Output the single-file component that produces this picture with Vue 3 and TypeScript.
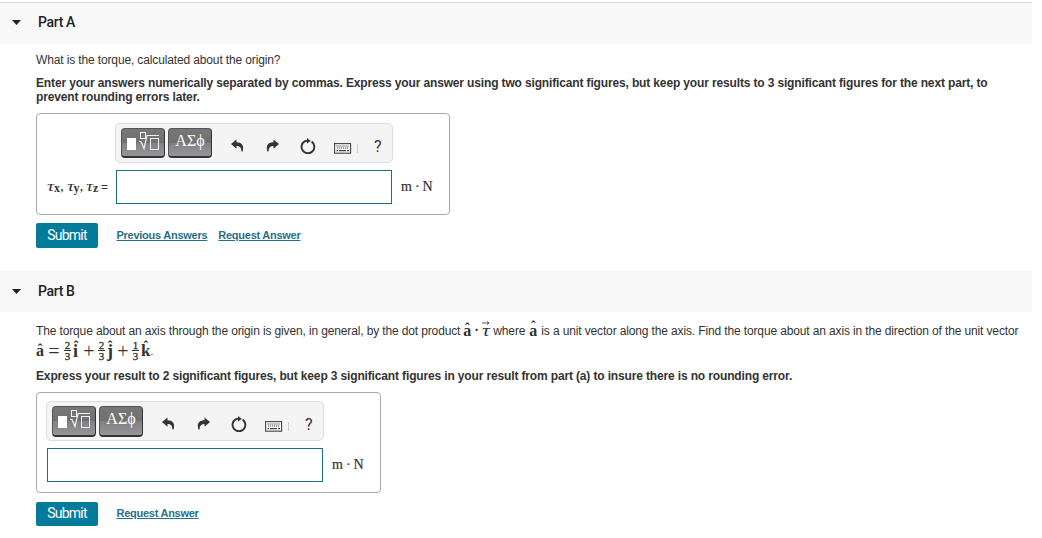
<script setup lang="ts">
import { ref } from "vue";

interface Part {
  id: string;
  title: string;
  label: boolean;
  links: string[];
}

const parts: Part[] = [
  { id: "a", title: "Part A", label: true, links: ["Previous Answers", "Request Answer"] },
  { id: "b", title: "Part B", label: false, links: ["Request Answer"] },
];

const components = ["x", "y", "z"];

// Terms of the unit vector
const terms = [
  { num: "2", den: "3", axis: "i" },
  { num: "2", den: "3", axis: "j" },
  { num: "1", den: "3", axis: "k" },
];

const answers = ref<Record<string, string>>({ a: "", b: "" });
</script>

<template>
  <main class="page">
    <section v-for="part in parts" :key="part.id" class="part" :class="'part-' + part.id">
      <header class="part-header">
        <svg class="caret" width="9" height="5" viewBox="0 0 9 5">
          <path d="M0 0H9L4.5 5Z" fill="#222" />
        </svg>
        <h2>{{ part.title }}</h2>
      </header>

      <div class="part-body">
        <template v-if="part.id === 'a'">
          <p class="question">What is the torque, calculated about the origin?</p>
          <p class="instructions">
            Enter your answers numerically separated by commas. Express your answer using two significant figures, but keep your results to 3 significant figures for the next part, to<br />
            prevent rounding errors later.
          </p>
        </template>
        <template v-else>
          <p class="question">
            <span>The torque about an axis through the origin is given, in general, by the dot product</span>
            <span class="math inline-dot"><b class="hat">a</b><span class="cdot">·</span><span class="vec"><i class="tau">τ</i><svg width="8" height="4" viewBox="0 0 8 4"><path d="M0 2H7M5 .4L7 2L5 3.6" fill="none" stroke="#333" stroke-width=".8" /></svg></span></span>
            <span class="where">where</span>
            <span class="math inline-a"><b class="hat">a</b></span>
            <span>is a unit vector along the axis. Find the torque about an axis in the direction of the unit vector</span>
          </p>
          <p class="formula math">
            <b class="hat">a</b><span class="op eq">=</span>
            <template v-for="(term, i) in terms" :key="term.axis">
              <span v-if="i > 0" class="op plus">+</span>
              <span class="frac"><span>{{ term.num }}</span><span class="den">{{ term.den }}</span></span>
              <b class="hat tall" :class="'axis-' + term.axis">{{ term.axis }}</b>
            </template>
            <span class="period">.</span>
          </p>
          <p class="instructions">
            Express your result to 2 significant figures, but keep 3 significant figures in your result from part (a) to insure there is no rounding error.
          </p>
        </template>

        <div class="answer-box">
          <div v-if="part.label" class="label math">
            <template v-for="(c, i) in components" :key="c"><i class="tau">τ</i><span class="sub">{{ c }}</span><span v-if="i < 2" class="comma">,</span></template>
            <span class="label-eq">=</span>
          </div>
          <div class="editor">
            <div class="toolbar">
              <button class="palette" aria-label="Templates">
                <svg width="32" height="20" viewBox="0 0 32 20">
                  <rect x="0" y="6" width="9" height="12" fill="#fff" />
                  <g fill="none" stroke="#f1f1f1">
                    <rect x="13.5" y="0.5" width="5" height="6" />
                    <path d="M12 9.5H14L17 16.5L20 3.5H32" stroke-width="1.2" />
                    <rect x="23.5" y="6.5" width="8" height="11" />
                  </g>
                </svg>
              </button>
              <button class="palette greek">ΑΣϕ</button>
              <svg class="icon undo" width="14" height="13" viewBox="0 0 14 13">
                <path d="M0 5L5.5 .5V3.2C10.8 3.2 13.4 6.6 11.6 12.5H10.4C10.6 8.7 8.7 7 5.5 7V9.8Z" fill="#333" />
              </svg>
              <svg class="icon redo" width="14" height="13" viewBox="0 0 14 13">
                <path d="M13 5L7.5 .5V3.2C2.2 3.2-.4 6.6 1.4 12.5H2.6C2.4 8.7 4.3 7 7.5 7V9.8Z" fill="#333" />
              </svg>
              <svg class="icon reset" width="16" height="16" viewBox="0 0 16 16">
                <path d="M11.6 3.6A6.4 6.4 0 1 1 4.6 3.4Q6 2.6 8 2.6" fill="none" stroke="#333" stroke-width="1.9" />
                <path d="M7 0L10.8 3L7 5.6Z" fill="#333" />
              </svg>
              <svg class="icon keyboard" width="18" height="11" viewBox="0 0 18 11">
                <rect x=".6" y=".6" width="16" height="9.6" fill="#fafafa" stroke="#444" stroke-width="1.1" />
                <path d="M2.5 3H15M3 5H15" stroke="#444" stroke-width="1.1" stroke-dasharray="1.2 .8" />
                <path d="M2.5 7.6H4M5 7.6H12M13 7.6H15" stroke="#444" stroke-width="1.2" />
              </svg>
              <span class="divider"></span>
              <span class="help">?</span>
            </div>
            <input v-model="answers[part.id]" class="answer" type="text" :aria-label="part.title" />
          </div>
          <div class="units math">m<span>·</span>N</div>
        </div>

        <div class="actions">
          <button class="submit">Submit</button>
          <a v-for="link in part.links" :key="link" href="#" @click.prevent>{{ link }}</a>
        </div>
      </div>
    </section>
  </main>
</template>

<style>
body {
  margin: 0;
  background: #fff;
}
</style>

<style scoped>
.page {
  width: 1032px;
  height: 538px;
  overflow: hidden;
  box-sizing: border-box;
  padding-top: 2px;
  color: #333;
  font: 12px/14px "Liberation Sans", Arial, sans-serif;
}
p {
  margin: 0;
  white-space: nowrap;
}
.part-header {
  display: flex;
  align-items: center;
  height: 41px;
  padding-left: 12px;
  background: #f8f8f8;
}
.part-a .part-header {
  border-top: 1px solid #d8d8d8;
}
.part-a {
  height: 269px;
}
h2 {
  margin: 0 0 1px 17px;
  color: #222;
  font: 500 14px/18px Roboto, sans-serif;
  letter-spacing: -0.35px;
}
.part-a h2 {
  margin-bottom: 3px;
}
.part-a .caret {
  margin-bottom: 2px;
}
.part-body {
  padding-left: 36px;
}
.part-a .question {
  padding-top: 9px;
}
.part-a .instructions {
  padding-top: 9px;
}
.question {
  letter-spacing: -0.135px;
}
.instructions {
  font-weight: bold;
  letter-spacing: -0.145px;
}
.part-b .question {
  display: flex;
  height: 14px;
  padding-top: 12px;
}
.math {
  font-family: "Liberation Serif", "Times New Roman", serif;
  letter-spacing: 0;
}
.hat {
  position: relative;
  font-size: 16px;
}
.hat::before {
  content: "ˆ";
  position: absolute;
  left: 50%;
  top: -1px;
  transform: translateX(-50%);
  font-size: 14px;
}
.hat.tall::before {
  top: -4px;
}
.tau {
  display: inline-block;
  width: 7px;
  transform: scaleX(1.35);
  transform-origin: left;
}
.inline-dot {
  display: flex;
  width: 25px;
  margin-left: 3px;
}
.inline-dot .hat::before,
.inline-a .hat::before {
  top: -2px;
}
.cdot {
  margin: 0 3px;
  font-size: 14px;
  font-weight: bold;
}
.vec {
  position: relative;
  font-size: 16px;
}
.vec svg {
  position: absolute;
  left: 0;
  top: -3px;
}
.where {
  margin-left: 5px;
}
.inline-a {
  margin: 0 4px;
}
.formula {
  display: flex;
  align-items: center;
  height: 26px;
  font-size: 15px;
}
.part-b .instructions {
  padding-top: 5px;
}
.op {
  width: 12px;
  font-size: 20px;
  text-align: center;
}
.eq {
  margin: 0 4px 0 4px;
}
.plus {
  margin: 0 3px 0 4px;
}
.frac {
  display: flex;
  flex-direction: column;
  width: 7px;
  margin-right: 2px;
  font-size: 11px;
  line-height: 9px;
  text-align: center;
  -webkit-text-stroke: 0.3px #333;
}
.den {
  border-top: 1px solid #333;
  padding-top: 1px;
}
.axis-i,
.axis-j {
  width: 6px;
  font-size: 18px;
}
.axis-k {
  font-size: 17px;
}
.period {
  font-size: 11px;
}
.answer-box {
  display: flex;
  box-sizing: border-box;
  width: 414px;
  height: 102px;
  margin-top: 9px;
  padding: 9px 0 0 9px;
  border: 1px solid #a9a9a9;
  border-radius: 4px;
}
.part-b .answer-box {
  width: 345px;
  height: 101px;
  padding-top: 8px;
}
.label {
  display: flex;
  align-items: baseline;
  box-sizing: border-box;
  width: 69px;
  padding: 56px 0 0 1px;
  font-size: 15px;
}
.sub {
  width: 6px;
  font-size: 12px;
  font-weight: bold;
  transform: translateY(1px);
}
.comma {
  width: 4px;
  margin-right: 2.5px;
}
.label-eq {
  margin-left: 2px;
  font: 12px/14px "Liberation Sans", sans-serif;
}
.editor {
  width: 278px;
}
.toolbar {
  display: flex;
  box-sizing: border-box;
  width: 278px;
  height: 40px;
  padding: 4px 0 0 5px;
  background: #f4f4f4;
  border: 1px solid #ddd;
  border-radius: 5px;
}
.palette {
  display: flex;
  justify-content: center;
  box-sizing: border-box;
  width: 44px;
  height: 30px;
  margin-right: 3px;
  padding: 0;
  color: #fff;
  background: linear-gradient(#777 0, #707072 50%, #808083 51%, #96969a 100%);
  border: 1px solid #555;
  border-right-color: #333;
  border-bottom: 2px solid #333;
  border-radius: 4px;
}
.part-b .palette {
  height: 31px;
}
.palette svg {
  flex: none;
  margin-top: 3px;
}
.greek {
  padding-top: 2px;
  font: 16px/20px "Liberation Serif", serif;
}
.icon {
  flex: none;
}
.undo {
  margin: 11px 0 0 16px;
}
.redo {
  margin: 11px 0 0 21px;
}
.reset {
  margin: 10px 0 0 20px;
}
.keyboard {
  margin: 15px 0 0 18px;
}
.divider {
  width: 1px;
  height: 9px;
  margin: 16px 0 0 5px;
  background: #ccc;
}
.help {
  margin: 10px 0 0 16px;
  font: 16px/18px Roboto, sans-serif;
}
.answer {
  display: block;
  box-sizing: border-box;
  width: 276px;
  height: 34px;
  margin: 7px 0 0 1px;
  padding: 0 6px;
  border: 1px solid #1c7080;
  background: #fff;
  outline: 0;
}
.units {
  padding: 57px 0 0 8px;
  font-size: 14px;
  -webkit-text-stroke: 0.2px #333;
}
.units span {
  margin: 0 3px;
}
.actions {
  display: flex;
  height: 25px;
  margin-top: 8px;
}
.part-b .actions {
  height: 24px;
  margin-top: 9px;
}
.submit {
  width: 62px;
  margin-right: 8px;
  padding: 0 0 2px;
  color: #fff;
  background: #057b9b;
  border: 0;
  border-radius: 2px;
  font: 14px/18px Roboto, sans-serif;
  letter-spacing: -0.75px;
}
.actions a {
  margin: 5px 0 0 11px;
  color: #286f88;
  font-size: 11px;
  font-weight: bold;
  letter-spacing: -0.26px;
}
.actions .submit + a {
  margin-left: 10.5px;
}
.part-b .actions a {
  margin-top: 4px;
}
</style>
